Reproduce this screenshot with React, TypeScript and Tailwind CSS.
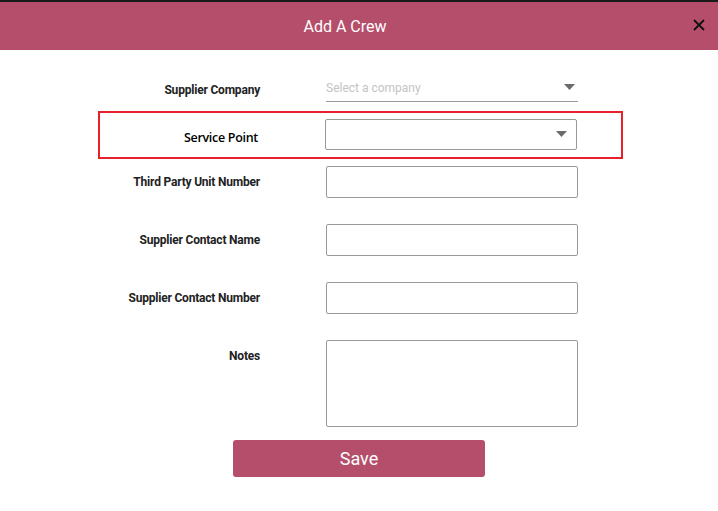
import React from "react";

const Arrow = () => (
  <svg width="11" height="6" viewBox="0 0 11 6" className="block">
    <path d="M0 0 L11 0 L5.5 6 Z" fill="#6b6b6b" />
  </svg>
);

const Label = ({ children }: { children: React.ReactNode }) => (
  <div className="w-[260px] shrink-0 text-right text-[12px] font-bold text-[#222] pt-[9px] leading-[14px] tracking-[-0.2px] [font-family:Roboto,sans-serif]">
    {children}
  </div>
);

export default function App() {
  return (
    <div className="w-[718px] h-[511px] bg-white overflow-hidden [font-family:Roboto,sans-serif]">
      <div className="h-[2px] bg-[#1a1a1a]" />
      <div className="relative h-[48px] bg-[#b54e6a] flex items-center justify-center pr-[28px]">
        <span className="text-white text-[16px] leading-none pt-[2px]">Add A Crew</span>
        <svg
          className="absolute right-[13px] top-[17px]"
          width="12"
          height="12"
          viewBox="0 0 12 12"
        >
          <path d="M1 1 L11 11 M11 1 L1 11" stroke="#111" strokeWidth="1.8" />
        </svg>
      </div>

      <div className="flex flex-col">
        {/* Supplier Company */}
        <div className="flex mt-[26px] h-[26px]">
          <div className="w-[260px] shrink-0 text-right text-[12px] font-bold text-[#222] leading-[14px] pt-[7px] tracking-[-0.2px]">
            Supplier Company
          </div>
          <div className="ml-[66px] w-[252px] border-b border-[#999] flex items-start justify-between">
            <span className="text-[12px] text-[#c4c4c4] leading-[14px] pt-[5px]">Select a company</span>
            <div className="pt-[8px] pr-[3px]">
              <Arrow />
            </div>
          </div>
        </div>

        {/* Service Point highlighted */}
        <div className="ml-[98px] mt-[9px] w-[525px] h-[48px] border-2 border-[#e8202a] flex items-center">
          <div className="w-[158px] shrink-0 text-right text-[12.5px] font-semibold text-black [font-family:'Open_Sans',sans-serif] tracking-[-0.3px] pt-[6px]">
            Service Point
          </div>
          <div className="ml-[67px] mb-[2px] w-[252px] h-[31px] border border-[#999] rounded-[2px] flex items-center justify-end pr-[9px]">
            <Arrow />
          </div>
        </div>

        {/* Third Party Unit Number */}
        <div className="flex mt-[7px]">
          <Label>Third Party Unit Number</Label>
          <div className="ml-[66px] w-[252px] h-[32px] border border-[#999] rounded-[2px]" />
        </div>

        <div className="flex mt-[26px]">
          <Label>Supplier Contact Name</Label>
          <div className="ml-[66px] w-[252px] h-[32px] border border-[#999] rounded-[2px]" />
        </div>

        <div className="flex mt-[26px]">
          <Label>Supplier Contact Number</Label>
          <div className="ml-[66px] w-[252px] h-[32px] border border-[#999] rounded-[2px]" />
        </div>

        <div className="flex mt-[26px]">
          <Label>Notes</Label>
          <div className="ml-[66px] w-[252px] h-[87px] border border-[#999] rounded-[2px]" />
        </div>

        <div className="flex justify-center mt-[13px]">
          <button className="w-[252px] h-[37px] bg-[#b54e6a] rounded-[3px] text-white text-[18px] leading-none">
            Save
          </button>
        </div>
      </div>
    </div>
  );
}
